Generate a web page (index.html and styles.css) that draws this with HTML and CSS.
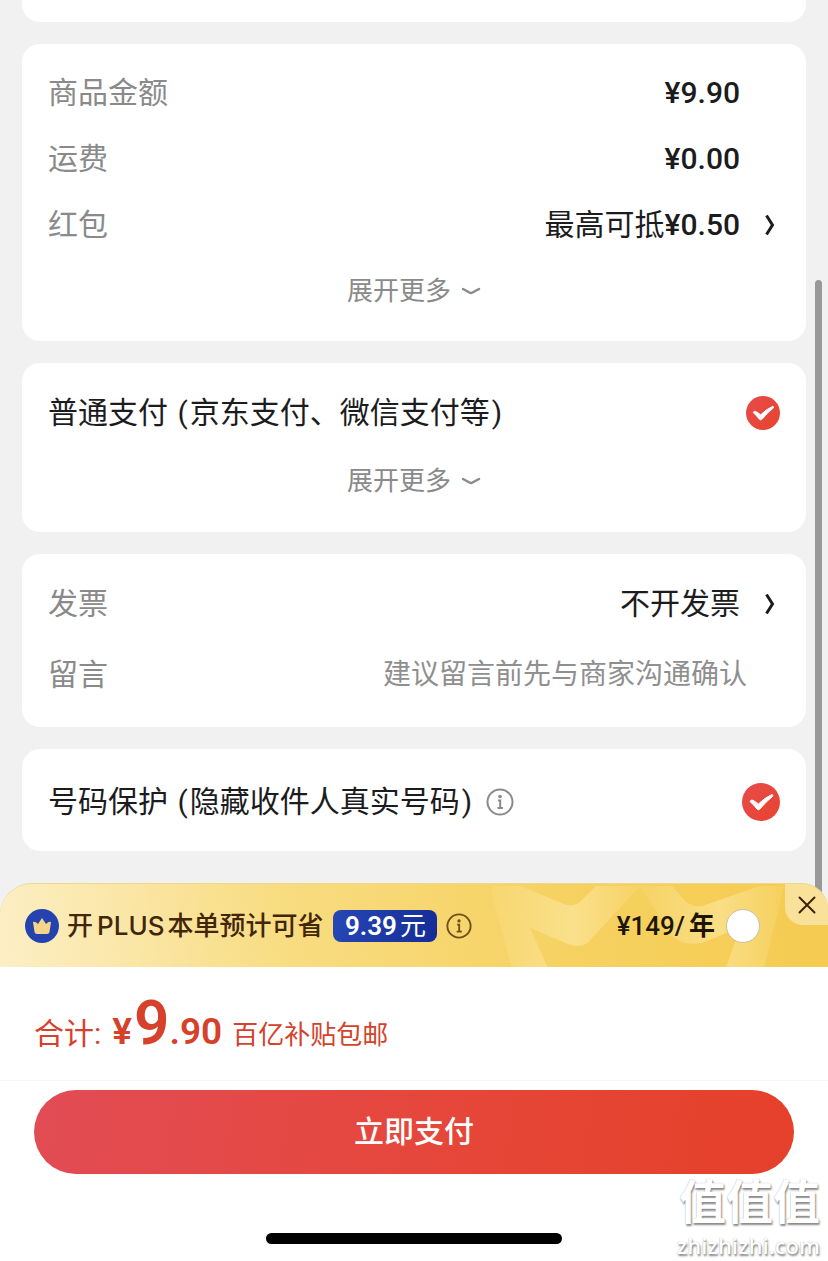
FILE: index.html
```html
<!DOCTYPE html>
<html lang="zh-CN">
<head>
    <meta charset="UTF-8">
    <meta name="viewport" content="width=device-width, initial-scale=1.0">
    <title>确认订单</title>
    <link rel="stylesheet" href="styles.css">
</head>
<body>

    <main class="order">
        <section class="card card-cut"></section>

        <!-- 金额明细 -->
        <section class="card amounts">
            <div class="row">
                <span class="label">商品金额</span>
                <span class="value price">¥9.90</span>
            </div>
            <div class="row">
                <span class="label">运费</span>
                <span class="value price">¥0.00</span>
            </div>
            <div class="row">
                <span class="label">红包</span>
                <button class="value link" type="button">最高可抵<span class="price">¥0.50</span>
                    <svg class="arrow" width="12" height="24" viewBox="0 0 12 24" aria-hidden="true"><path d="M2.500 2.500 L8.500 12 L2.500 21.500" /></svg>
                </button>
            </div>
            <button class="row more" type="button">展开更多
                <svg class="arrow-down" width="20" height="10" viewBox="0 0 20 10" aria-hidden="true"><path d="M2 3 L8.500 6.500 Q10 7.300 11.500 6.500 L18 3" /></svg>
            </button>
        </section>

        <!-- 支付方式 -->
        <section class="card payment">
            <div class="row">
                <label class="title" for="pay">普通支付 <span class="paren">(</span>京东支付、微信支付等<span class="paren">)</span></label>
                <span class="check">
                    <input type="checkbox" id="pay" checked>
                    <svg viewBox="0 0 38 38" aria-hidden="true"><path d="M8 18.5 Q9 16 11.5 17.5 L16.5 21 Q22 15 30 11.5 Q31.500 12 30.500 13.500 Q24 18.500 18 26 Q16.500 27.500 15 26 Q12 22 8 18.500 Z" /></svg>
                </span>
            </div>
            <button class="row more" type="button">展开更多
                <svg class="arrow-down" width="20" height="10" viewBox="0 0 20 10" aria-hidden="true"><path d="M2 3 L8.500 6.500 Q10 7.300 11.500 6.500 L18 3" /></svg>
            </button>
        </section>

        <!-- 发票与留言 -->
        <section class="card invoice">
            <div class="row">
                <span class="label">发票</span>
                <button class="value link" type="button">不开发票
                    <svg class="arrow" width="12" height="24" viewBox="0 0 12 24" aria-hidden="true"><path d="M2.500 2.500 L8.500 12 L2.500 21.500" /></svg>
                </button>
            </div>
            <div class="row">
                <label class="label" for="message">留言</label>
                <input class="message" id="message" type="text" placeholder="建议留言前先与商家沟通确认">
            </div>
        </section>

        <!-- 号码保护 -->
        <section class="card protect">
            <div class="row">
                <label class="title" for="protect">号码保护 <span class="paren">(</span>隐藏收件人真实号码<span class="paren">)</span></label>
                <button class="info" type="button" aria-label="说明">
                    <svg width="28" height="28" viewBox="0 0 28 28" aria-hidden="true">
                        <circle class="ring" cx="14" cy="14" r="12.500" />
                        <circle class="dot" cx="14" cy="8.500" r="1.800" />
                        <path class="stem" d="M12 12.500 H14.200 V19.500 M11.500 20 H17" />
                    </svg>
                </button>
                <span class="check check-large">
                    <input type="checkbox" id="protect" checked>
                    <svg viewBox="0 0 38 38" aria-hidden="true"><path d="M8 18.5 Q9 16 11.5 17.5 L16.5 21 Q22 15 30 11.5 Q31.500 12 30.500 13.500 Q24 18.500 18 26 Q16.500 27.500 15 26 Q12 22 8 18.500 Z" /></svg>
                </span>
            </div>
        </section>

        <div class="scrollbar"></div>
    </main>

    <footer class="checkout">
        <!-- PLUS 会员 -->
        <div class="plus">
            <svg class="plus-bg" width="340" height="84" viewBox="-10 0 340 84" aria-hidden="true">
                <defs>
                    <linearGradient id="fade" x1="0" y1="0" x2="1" y2="0">
                        <stop offset="0" stop-color="#fff2bd" stop-opacity="0.100" />
                        <stop offset="0.550" stop-color="#fff2bd" stop-opacity="0.450" />
                        <stop offset="1" stop-color="#fff2bd" stop-opacity="0.100" />
                    </linearGradient>
                </defs>
                <path fill="url(#fade)" d="M-6 2 H22 L66 20 Q75 24 83 17 L98 2 H142 L94 54 Q86 66 70 60 L32 44 L50 84 H14 L-6 12 Z" />
                <path fill="url(#fade)" d="M142 2 H174 L187 17 Q197 26 210 20 L262 2 H286 L266 84 H228 L242 43 L214 55 Q190 66 174 52 Z" />
            </svg>
            <svg class="crown" width="34" height="34" viewBox="0 0 34 34" aria-hidden="true">
                <circle cx="17" cy="17" r="17" fill="#2443ae" />
                <path d="M8 13 Q10 12 13 15 L17 9 L21 15 Q24 12 26 13 L24.500 23 Q24 25 22 25 H12 Q10 25 9.500 23 Z" fill="#f6d58a" />
            </svg>
            <label class="plus-text" for="plus">开<span class="latin">PLUS</span>本单预计可省</label>
            <span class="saving"><b>9.39</b>元</span>
            <button class="info info-plus" type="button" aria-label="说明">
                <svg width="26" height="26" viewBox="0 0 28 28" aria-hidden="true">
                    <circle class="ring" cx="14" cy="14" r="12.500" />
                    <circle class="dot" cx="14" cy="8.500" r="1.800" />
                    <path class="stem" d="M12 12.500 H14.200 V19.500 M11.500 20 H17" />
                </svg>
            </button>
            <span class="plus-price"><span class="price">¥149/</span>年</span>
            <input class="plus-check" type="checkbox" id="plus">
            <button class="close" type="button" aria-label="关闭">
                <svg width="18" height="18" viewBox="0 0 18 18" aria-hidden="true"><path d="M1.500 1.500 L16.500 16.500 M16.500 1.500 L1.500 16.500" /></svg>
            </button>
        </div>

        <div class="total">
            <span class="total-label">合计:</span>
            <span class="total-price">¥<span class="big">9</span>.90</span>
            <span class="total-note">百亿补贴包邮</span>
        </div>

        <div class="actions">
            <button class="pay" type="button">立即支付</button>
        </div>

        <div class="home-bar"></div>

        <div class="watermark">
            <span class="watermark-name">值值值</span>
            <span class="watermark-url">zhizhizhi.com</span>
        </div>
    </footer>

</body>
</html>
```
FILE: styles.css
```css
* {
    margin: 0;
    padding: 0;
    box-sizing: border-box;
}

body {
    font-family: Roboto, "Noto Sans CJK SC", sans-serif;
    font-size: 30px;
    line-height: 40px;
    background-color: #f1f1f2;
    color: #1c1c1e;
    min-height: 100vh;
    display: flex;
    flex-direction: column;
}

button,
input {
    font: inherit;
    color: inherit;
    background: none;
    border: none;
}

button,
label,
input[type="checkbox"] {
    cursor: pointer;
}

svg {
    display: block;
    flex-shrink: 0;
}

/* 订单内容 */
.order {
    position: relative;
    display: flex;
    flex-direction: column;
    gap: 22px;
    padding: 0 22px 32px;
}

.card {
    background-color: #fff;
    border-radius: 18px;
    padding: 16px 26px 17px;
}

.card-cut {
    height: 22px;
    padding: 0;
    border-radius: 0 0 18px 18px;
}

.row {
    display: flex;
    align-items: center;
    width: 100%;
    height: 66px;
}

.payment .row {
    height: 68px;
}

.invoice {
    padding: 14px 26px 17px;
}

.invoice .row {
    height: 71px;
}

.protect {
    padding: 20px 26px 16px;
}

.label {
    color: #8a8a8a;
}

.paren {
    margin: 0 2px;
}

.value {
    margin-left: auto;
    margin-right: 40px;
}

.price {
    font-weight: 500;
}

.link {
    display: flex;
    align-items: center;
    margin-right: 4px;
}

.arrow {
    margin-left: 24px;
    fill: none;
    stroke: #1c1c1e;
    stroke-width: 3;
}

.more {
    justify-content: center;
    gap: 10px;
    font-size: 26px;
    color: #8a8a8a;
}

.arrow-down {
    fill: none;
    stroke: #8a8a8a;
    stroke-width: 2.5;
    stroke-linecap: round;
}

.message {
    flex: 1;
    min-width: 0;
    margin-right: 33px;
    font-size: 28px;
    text-align: right;
    outline: none;
}

.message::placeholder {
    color: #8f8f8f;
    opacity: 1;
}

/* 圆形勾选框 */
.check {
    display: grid;
    width: 34px;
    height: 34px;
    margin-left: auto;
}

.check-large {
    width: 38px;
    height: 38px;
}

.check input,
.check svg {
    grid-area: 1 / 1;
    width: 100%;
    height: 100%;
}

.check input {
    appearance: none;
    border: 1px solid #c8c8c8;
    border-radius: 50%;
}

.check input:checked {
    border: none;
    background: linear-gradient(135deg, #e74b4b, #e8432f);
}

.check svg {
    fill: #fff;
    stroke: #fff;
    stroke-width: 1;
    pointer-events: none;
}

.info {
    margin-left: 12px;
    color: #8a8a8a;
}

.ring,
.stem {
    fill: none;
    stroke: currentColor;
    stroke-width: 2;
}

.dot {
    fill: currentColor;
}

.scrollbar {
    position: absolute;
    top: 280px;
    right: 6px;
    bottom: -20px;
    width: 7px;
    border-radius: 4px;
    background-color: #999;
}

/* 底部结算栏 */
.checkout {
    position: relative;
    flex: 1;
    background: linear-gradient(transparent 60px, #fff 60px);
}

.plus {
    position: relative;
    display: flex;
    align-items: center;
    height: 84px;
    padding: 0 68px 0 25px;
    overflow: hidden;
    border-top: 1px solid #eed88a;
    border-radius: 32px 26px 0 0;
    background: linear-gradient(80deg, #fcefc6, #f8dc80 35%, #f6d160 70%, #f5cb50);
    color: #42260a;
    font-size: 26px;
}

.plus-bg {
    position: absolute;
    top: 0;
    right: 0;
}

.crown {
    position: relative;
}

.plus-text {
    margin-left: 8px;
    font-weight: 500;
    white-space: nowrap;
}

.latin {
    margin: 0 3px 0 4px;
    font-family: Inter, sans-serif;
}

.saving {
    display: flex;
    align-items: center;
    justify-content: center;
    gap: 3px;
    width: 104px;
    height: 32px;
    margin-left: 10px;
    border-radius: 8px;
    background: linear-gradient(100deg, #2647b4, #152c98);
    color: #fff;
}

.saving b {
    font-weight: 600;
}

.info-plus {
    margin-left: 9px;
    color: #6b5018;
}

.plus-price {
    position: relative;
    margin-left: auto;
    color: #1d1608;
    font-weight: 600;
}

.plus-price .price {
    margin-right: 4px;
}

.plus-check {
    position: relative;
    appearance: none;
    width: 34px;
    height: 34px;
    margin-left: 11px;
    border: 1px solid #c9bfa4;
    border-radius: 50%;
    background-color: #fff;
}

.plus-check:checked {
    border: 10px solid #e8432f;
}

.close {
    position: absolute;
    top: 0;
    right: 0;
    display: grid;
    place-items: center;
    width: 43px;
    height: 41px;
    border-radius: 0 0 0 18px;
    background-color: #fae19a;
}

.close path {
    stroke: #3b240d;
    stroke-width: 2;
    stroke-linecap: round;
}

.total {
    display: flex;
    align-items: baseline;
    height: 114px;
    padding: 20px 34px 0;
    border-bottom: 1px solid #f7f7f7;
    color: #d6412c;
    line-height: 72px;
}

.total-price {
    margin-left: 11px;
    font-size: 37px;
    font-weight: 600;
}

.big {
    margin-left: 2px;
    font-size: 62px;
}

.total-note {
    margin-left: 10px;
    font-size: 26px;
}

.actions {
    padding: 9px 34px 11px;
}

.pay {
    display: block;
    width: 100%;
    height: 84px;
    border-radius: 42px;
    background: linear-gradient(100deg, #e24c55, #e64637 60%, #e5402a);
    color: #fff;
    font-weight: 500;
}

.home-bar {
    width: 296px;
    height: 11px;
    margin: 48px auto 17px;
    border-radius: 6px;
    background-color: #000;
}

.watermark {
    position: absolute;
    right: 8px;
    bottom: 2px;
    display: flex;
    flex-direction: column;
    gap: 4px;
    align-items: flex-end;
    color: #fff;
    font-weight: 700;
    text-shadow: 1px 2px 2px #888, 0 0 1px #aaa;
}

.watermark-name {
    font-size: 47px;
    line-height: 48px;
}

.watermark-url {
    font-family: "Open Sans", sans-serif;
    font-size: 22px;
    font-weight: 600;
    line-height: 28px;
}
```
